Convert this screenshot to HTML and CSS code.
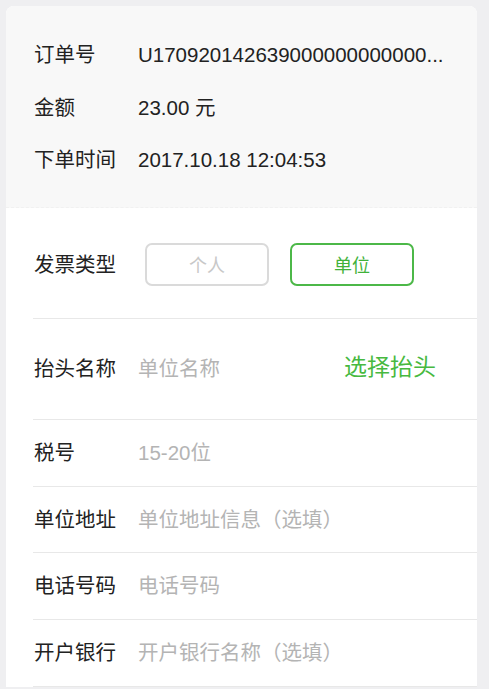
FILE: index.html
```html
<!DOCTYPE html>
<html lang="zh-CN">
<head>
<meta charset="utf-8">
<title>发票信息</title>
<link rel="stylesheet" href="styles.css">
</head>
<body>
<div class="card">
  <section class="order">
    <div class="order-row"><span class="label">订单号</span><span class="value">U170920142639000000000000...</span></div>
    <div class="order-row"><span class="label">金额</span><span class="value">23.00 元</span></div>
    <div class="order-row"><span class="label">下单时间</span><span class="value">2017.10.18 12:04:53</span></div>
  </section>
  <section class="form">
    <div class="row row-type">
      <span class="label">发票类型</span>
      <div class="types">
        <button class="type-btn">个人</button>
        <button class="type-btn active">单位</button>
      </div>
    </div>
    <div class="row row-title">
      <span class="label">抬头名称</span>
      <input class="field" type="text" placeholder="单位名称">
      <span class="pick">选择抬头</span>
    </div>
    <div class="row">
      <span class="label">税号</span>
      <input class="field" type="text" placeholder="15-20位">
    </div>
    <div class="row">
      <span class="label">单位地址</span>
      <input class="field" type="text" placeholder="单位地址信息（选填）">
    </div>
    <div class="row">
      <span class="label">电话号码</span>
      <input class="field" type="text" placeholder="电话号码">
    </div>
    <div class="row">
      <span class="label">开户银行</span>
      <input class="field" type="text" placeholder="开户银行名称（选填）">
    </div>
  </section>
</div>
</body>
</html>
```
FILE: styles.css
```css
* { box-sizing: border-box; }
html, body {
  margin: 0;
  padding: 0;
  background: #efeff1;
  font-family: "Liberation Sans", "Noto Sans CJK SC", sans-serif;
  color: #222;
}
.card {
  margin: 6px 12px 0 6px;
  border-radius: 8px 8px 0 0;
  overflow: hidden;
  background: #fff;
}
.order {
  background: #f8f8f8;
  padding: 23px 0 20.5px 28px;
  border-bottom: 1px dashed #f1f1f1;
}
.order-row {
  display: flex;
  align-items: center;
  height: 52.5px;
  font-size: 20.5px;
  line-height: 24px;
}
.label {
  width: 104px;
  flex: none;
  font-size: 20.5px;
  line-height: 24px;
  color: #222;
}
.value {
  white-space: nowrap;
  color: #222;
}
.form {
  padding-left: 27px;
}
.row {
  display: flex;
  align-items: center;
  height: 66.7px;
  border-bottom: 1px solid #e8e8e8;
  padding-left: 1px;
}
.row-type {
  height: 111px;
  padding-top: 3px;
}
.row-title {
  height: 101px;
  padding-right: 41px;
}
.types {
  display: flex;
  gap: 21px;
  margin-left: 7px;
}
.type-btn {
  width: 124px;
  height: 43px;
  border: 2px solid #dadada;
  border-radius: 7px;
  background: #fff;
  color: #c8c8c8;
  font-family: inherit;
  font-size: 18px;
  padding: 0 0 2px;
}
.type-btn.active {
  border-color: #4cb848;
  color: #3fb23a;
}
.field {
  flex: 1;
  min-width: 0;
  border: none;
  outline: none;
  background: transparent;
  font-family: inherit;
  font-size: 20.5px;
  line-height: 24px;
  padding: 0;
  color: #222;
}
.field::placeholder {
  color: #b4b4b4;
}
.pick {
  color: #47b940;
  font-size: 23px;
  line-height: 28px;
  margin-top: -4px;
  flex: none;
}
```
